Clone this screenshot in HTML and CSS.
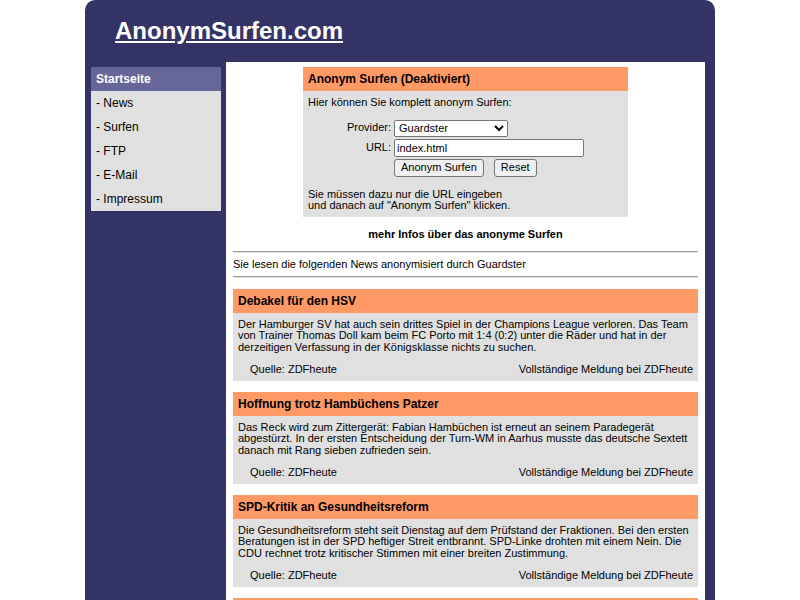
FILE: index.html
```html
<!DOCTYPE html>
<html lang="de">
<head>
<meta charset="utf-8">
<title>AnonymSurfen.com</title>
<link rel="stylesheet" href="styles.css">
</head>
<body>
<div class="page">
  <div class="header">
    <a class="logo" href="#">AnonymSurfen.com</a>
  </div>
  <div class="main">
    <div class="sidebar">
      <div class="menu-head">Startseite</div>
      <div class="menu-item">- News</div>
      <div class="menu-item">- Surfen</div>
      <div class="menu-item">- FTP</div>
      <div class="menu-item">- E-Mail</div>
      <div class="menu-item">- Impressum</div>
    </div>
    <div class="content">
      <div class="surfbox">
        <div class="box-head">Anonym Surfen (Deaktiviert)</div>
        <div class="box-body">
          <div class="intro">Hier können Sie komplett anonym Surfen:</div>
          <div class="form-grid">
            <label class="lbl">Provider:</label>
            <select class="sel"><option>Guardster</option></select>
            <label class="lbl">URL:</label>
            <input class="url" type="text" value="index.html">
            <span></span>
            <div class="btns"><button class="btn">Anonym Surfen</button><button class="btn reset">Reset</button></div>
          </div>
          <div class="note">Sie müssen dazu nur die URL eingeben<br>und danach auf "Anonym Surfen" klicken.</div>
        </div>
      </div>
      <div class="more">mehr Infos über das anonyme Surfen</div>
      <hr class="rule first">
      <div class="via">Sie lesen die folgenden News anonymisiert durch Guardster</div>
      <hr class="rule second">

      <div class="news">
        <div class="news-head">Debakel für den HSV</div>
        <div class="news-body">
          <div class="news-text">Der Hamburger SV hat auch sein drittes Spiel in der Champions League verloren. Das Team von Trainer Thomas Doll kam beim FC Porto mit 1:4 (0:2) unter die Räder und hat in der derzeitigen Verfassung in der Königsklasse nichts zu suchen.</div>
          <div class="news-src"><span>Quelle: ZDFheute</span><span>Vollständige Meldung bei ZDFheute</span></div>
        </div>
      </div>

      <div class="news">
        <div class="news-head">Hoffnung trotz Hambüchens Patzer</div>
        <div class="news-body">
          <div class="news-text">Das Reck wird zum Zittergerät: Fabian Hambüchen ist erneut an seinem Paradegerät abgestürzt. In der ersten Entscheidung der Turn-WM in Aarhus musste das deutsche Sextett danach mit Rang sieben zufrieden sein.</div>
          <div class="news-src"><span>Quelle: ZDFheute</span><span>Vollständige Meldung bei ZDFheute</span></div>
        </div>
      </div>

      <div class="news">
        <div class="news-head">SPD-Kritik an Gesundheitsreform</div>
        <div class="news-body">
          <div class="news-text">Die Gesundheitsreform steht seit Dienstag auf dem Prüfstand der Fraktionen. Bei den ersten Beratungen ist in der SPD heftiger Streit entbrannt. SPD-Linke drohten mit einem Nein. Die CDU rechnet trotz kritischer Stimmen mit einer breiten Zustimmung.</div>
          <div class="news-src"><span>Quelle: ZDFheute</span><span>Vollständige Meldung bei ZDFheute</span></div>
        </div>
      </div>

      <div class="news">
        <div class="news-head">&nbsp;</div>
        <div class="news-body">
          <div class="news-text">&nbsp;</div>
        </div>
      </div>
    </div>
  </div>
</div>
</body>
</html>
```

FILE: styles.css
```css
html, body {
  margin: 0;
  padding: 0;
  background: #ffffff;
  font-family: "Liberation Sans", Arial, sans-serif;
  font-size: 11px;
  color: #000;
}

.page {
  width: 630px;
  margin: 0 auto;
  background: #333366;
  border-radius: 10px 10px 0 0;
  min-height: 700px;
}

.header {
  height: 62px;
  box-sizing: border-box;
  padding: 17px 30px 0;
}

.logo {
  color: #ffffff;
  font-size: 24px;
  font-weight: bold;
  text-decoration: underline;
}

.main {
  display: flex;
  align-items: flex-start;
  padding: 0 10px 0 6px;
  gap: 5px;
}

.sidebar {
  width: 130px;
  margin-top: 5px;
  background: #e0e0e0;
  font-size: 12px;
}

.menu-head {
  background: #666699;
  color: #ffffff;
  font-weight: bold;
  height: 24px;
  line-height: 24px;
  padding: 0 5px;
}

.menu-item {
  height: 24px;
  line-height: 24px;
  padding: 0 5px;
  color: #000;
}

.content {
  flex: 1;
  background: #ffffff;
  padding: 5px 7px 0;
  min-height: 600px;
  line-height: 11.5px;
}

.surfbox {
  width: 325px;
  margin: 0 auto;
  background: #e0e0e0;
}

.box-head {
  background: #ff9966;
  font-size: 12px;
  font-weight: bold;
  line-height: 14px;
  padding: 5px;
}

.box-body {
  padding: 6px 5px 5px;
}

.form-grid {
  display: grid;
  grid-template-columns: 83px auto;
  column-gap: 3px;
  row-gap: 2px;
  margin-top: 11px;
  align-items: center;
  justify-items: start;
}

.lbl {
  justify-self: end;
}

.sel {
  font-family: "Liberation Sans", Arial, sans-serif;
  font-size: 11px;
  width: 114px;
  height: 17px;
  margin: 0;
}

.url {
  font-family: "Liberation Sans", Arial, sans-serif;
  font-size: 11px;
  width: 190px;
  height: 18px;
  box-sizing: border-box;
  margin: 0;
  padding: 1px 2px;
  border: 1px solid #767676;
  border-radius: 2px;
}

.btns {
  display: flex;
  gap: 10px;
}

.btn {
  font-family: "Liberation Sans", Arial, sans-serif;
  font-size: 11px;
  padding: 1px 6px;
  border: 1px solid #767676;
  border-radius: 3px;
  background: #efefef;
  color: #000;
  height: 18px;
  line-height: 13px;
  margin: 0;
}

.note {
  margin-top: 12px;
}

.more {
  text-align: center;
  font-weight: bold;
  margin-top: 12px;
}

.rule {
  border: 0;
  border-top: 1px solid #9a9a9a;
  border-bottom: 1px solid #e4e4e4;
  height: 0;
  margin: 0;
}

.rule.first {
  margin-top: 11px;
  margin-bottom: 6px;
}

.rule.second {
  margin-top: 5px;
  margin-bottom: 11px;
}

.news {
  background: #e0e0e0;
  margin-bottom: 11px;
}

.news-head {
  background: #ff9966;
  font-size: 12px;
  font-weight: bold;
  line-height: 14px;
  padding: 5px;
}

.news-body {
  padding: 6px 5px 5px;
}

.news-src {
  display: flex;
  justify-content: space-between;
  padding-left: 12px;
  margin-top: 11px;
}
```
